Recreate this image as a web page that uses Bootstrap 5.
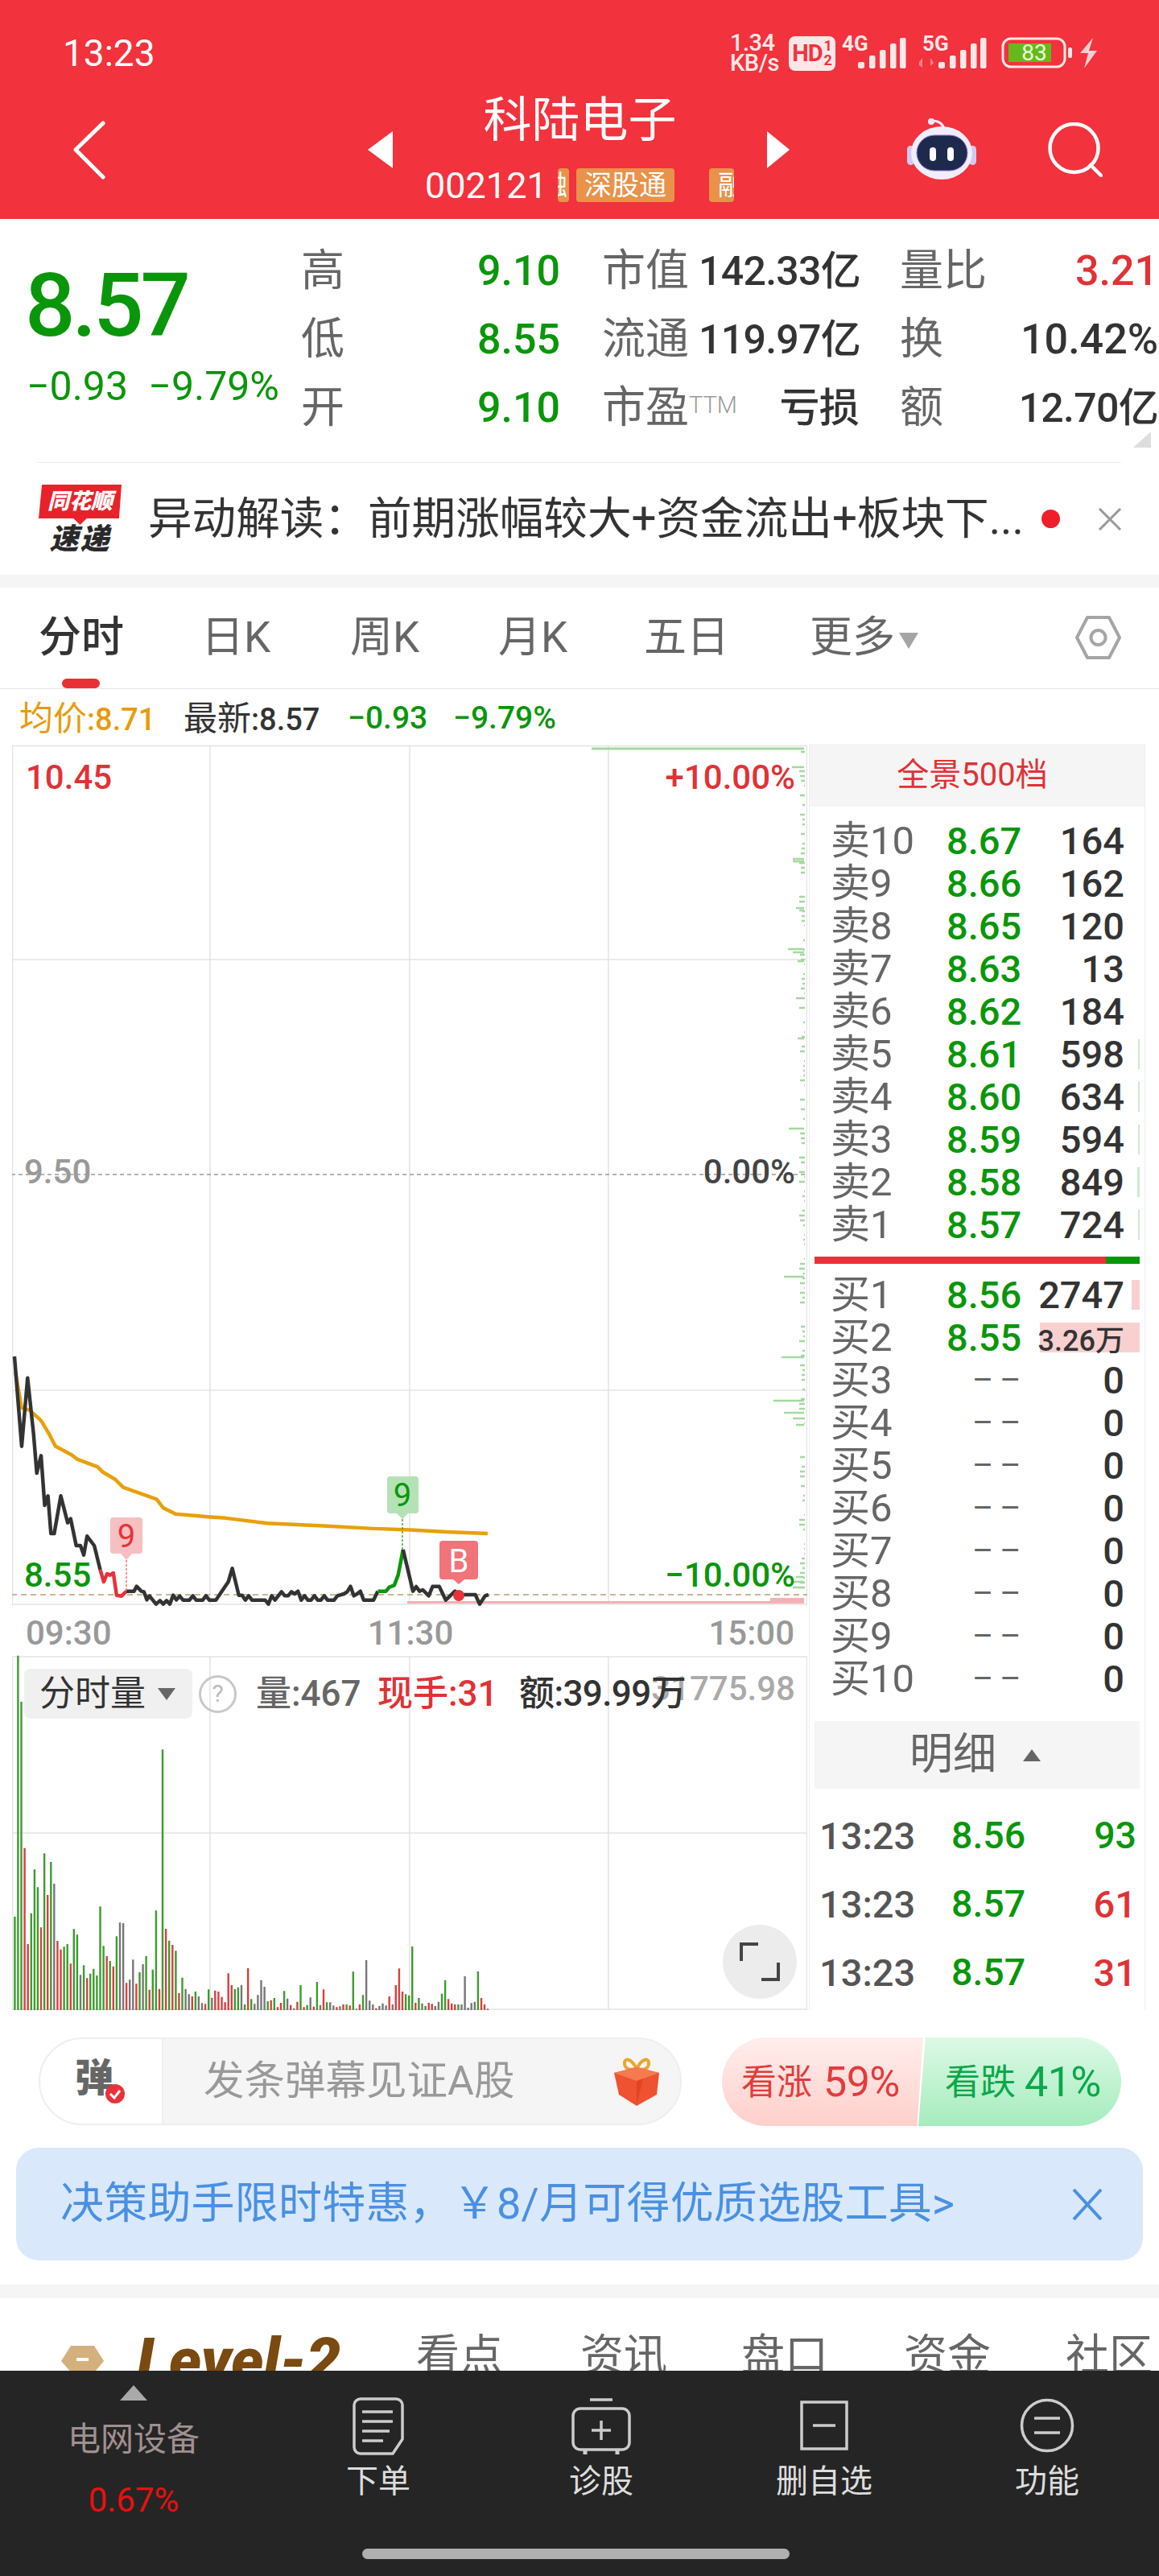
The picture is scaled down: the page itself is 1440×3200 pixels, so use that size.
<!DOCTYPE html>
<html lang="zh"><head><meta charset="utf-8"><title>科陆电子</title>
<link href="https://cdn.jsdelivr.net/npm/bootstrap@5.3.0/dist/css/bootstrap.min.css" rel="stylesheet">
<style>
html,body{margin:0;background:#fff}
body{width:1440px;height:3200px;overflow:hidden;font-family:Roboto,"Noto Sans CJK SC",sans-serif;line-height:1;color:#333}
.up{color:#e03236}.dn{color:#0a960a}.dk{color:#333}.gy{color:#666}
.hdr{background:#f2323c;height:272px;color:#fff}
.sbar{height:110px;padding:22px 76px 0 78px}
.clock{font-size:46px}
.netspeed{font-size:29px;font-weight:500;line-height:25px;width:62px;color:#fde8e8;white-space:nowrap;letter-spacing:-.5px}
.hdchip{width:58px;height:43px;background:#fde8e8;color:#f2323c;border-radius:8px;font-size:29px;font-weight:700;margin-left:11px;letter-spacing:-1px}
.hdsub{font-size:18px;line-height:18px;margin-left:2px;letter-spacing:0}
.tline{height:162px;padding:0 0 10px 90px}
.ctr{width:465px;height:100%}
.tname{font-size:60px;line-height:60px;margin-top:10px}
.coderow{height:46px;margin-top:27px;padding-left:40px;overflow:hidden}
.codeno{font-size:45px;width:149px;text-align:left}
.tg{height:42px;background:#e8924a;border-radius:4px;font-size:34px;overflow:hidden;white-space:nowrap}
.tg1{width:14px;margin-left:16px;justify-content:flex-end;padding-right:2px}
.tg2{width:122px;margin-left:9px;justify-content:center}
.tg3{width:31px;margin-left:43px;padding-left:11px}
.qt{height:302px;padding:22px 0 0 31px}
.qleft{width:343px}
.bigp{font-size:110px;line-height:100px;margin-top:36px;font-weight:500;letter-spacing:-4px}
.subp{font-size:50px;line-height:50px;margin-top:25px;width:316px}
.qgrid{display:grid;grid-template-rows:repeat(3,85px);grid-template-columns:54px 268px 52px 120px 199px 51px 110px 211px;font-size:52px;align-items:center}
.qlb{color:#666;font-size:54px;white-space:nowrap}.qv{text-align:right;font-weight:500;white-space:nowrap}
.qcomp{font-size:50px;letter-spacing:-.7px}
.ttm{font-size:29px;color:#999;vertical-align:12px;font-weight:300}
.corner{position:absolute;right:10px;bottom:18px;width:22px;height:20px;background:#ddd;clip-path:polygon(100% 0,100% 100%,0 100%)}
.rule{height:1px;background:#eee;margin:0 47px 0 46px}
.news{height:139px;padding-left:48px}
.logo{width:103px;height:85px}
.logotop{height:50px;padding-bottom:8px;background:#e8222a;color:#fff;font-size:27px;font-weight:900;font-style:italic;clip-path:polygon(4% 0,100% 0,97% 84%,58% 84%,50% 100%,42% 84%,0 84%)}
.logobot{font-size:36px;font-weight:900;font-style:italic;color:#2a2a2a;line-height:36px;letter-spacing:2px}
.newst{font-size:54.600px;color:#333;margin-left:33px;width:1091px;white-space:nowrap}
.ndot{width:23px;height:23px;background:#f01e28;margin-left:19px}
.band{background:#f5f5f5}
.tabs{height:126px;display:grid;grid-template-columns:202px 185px 184px 181px 206px 330px auto;padding:36px 0 0 48px;border-bottom:1px solid #e5e5e5;font-size:53px;color:#666;position:relative}
.tabon{color:#333;font-weight:500}
.tabbar{position:absolute;left:77px;bottom:0;width:47px;height:12px;background:#ea3035;border-radius:6px}
.infor{height:68px;display:grid;grid-template-columns:204px 204px 131px auto;padding:5px 0 0 24px;font-size:38px;align-items:center;font-weight:500}
.infor b{font-size:42px;font-weight:400}
.infor .dn{font-size:39px}
.avgc{color:#e89b0c}
.wrapm{height:1573px}
.chartc{width:988px;margin-left:15px;margin-right:2px;position:relative;height:1573px}
.chartc svg{display:block}
.chartc text{font-family:Roboto,"Noto Sans CJK SC",sans-serif}
.volh{position:absolute;left:15px;top:1149px;height:62px;font-size:44px}
.chip{width:209px;height:62px;background:#f0f0f0;border-radius:8px;font-size:44px;padding-left:19px;color:#333}
.chipc{width:0;height:0;border-left:11px solid transparent;border-right:11px solid transparent;border-top:15px solid #666;margin-left:15px}
.qm{width:47px;height:47px;border:3px solid #c8c8c8;color:#bbb;font-size:30px;margin-left:8px}
.vcell1{margin-left:24px;width:151px;color:#666;font-weight:500;white-space:nowrap}
.vcell2{width:176px;font-weight:500;white-space:nowrap}
.vcell3{white-space:nowrap;font-weight:500;letter-spacing:-.6px}
.expb{position:absolute;left:883px;top:1467px;width:92px;height:92px;background:#ececec}
.book{width:418px;height:1573px;border-left:1px solid #eee;border-right:1px solid #eee}
.bookh{height:78px;background:#f5f5f5;color:#e03236;font-size:40px;padding-right:12px}
.obr{display:grid;grid-template-columns:144px 91px 1fr;height:53px;padding:0 25px 0 26px;align-items:center;position:relative;font-size:47px;font-weight:500}
.obr>*{position:relative}
.obl{color:#666;font-size:49px;font-weight:400;white-space:nowrap}
.obq{text-align:right;color:#333}
.obq small{font-size:36px}
.dbar{position:absolute!important;right:6px;top:8px;height:37px}
.dg{background:#cfe8cf}.dr{background:#f8d0d0}
.sepb{height:9px;margin:13px 6px 12px}
.sepr{width:362px;background:#e8323a}.sepg{background:#0a960a}
.dsh{font-size:40px;letter-spacing:8px;color:#666;font-weight:400;margin-left:32px;white-space:nowrap}
.dtlb{height:84px;margin:26px 6px 16px;background:#f5f5f5;color:#666;font-size:54px;padding-left:118px}
.dtlc{width:0;height:0;border-left:11px solid transparent;border-right:11px solid transparent;border-bottom:15px solid #666;margin-left:33px}
.dtr{display:grid;grid-template-columns:164px 91px 1fr;height:85px;padding:0 10px 0 12px;align-items:center;font-size:47px;font-weight:500}
.dtr .dn{font-size:46.500px}
.dtt{color:#555}.dtq{text-align:right}
.actr{padding:34px 47px 0 48px;height:143px}
.pill{width:799px;height:109px;border:2px solid #eee;border-radius:55px;overflow:hidden;background:#f5f5f5}
.pilll{width:153px;height:100%;background:#fff;border-right:2px solid #eee;padding:0 0 8px 43px;position:relative;font-size:48px;font-weight:900;color:#666}
.pillt{font-size:50.500px;color:#999;margin-left:50px;width:509px;white-space:nowrap}
.vote{margin-left:50px;height:110px;width:496px;position:relative}
.vup,.vdn{position:absolute;top:0;height:110px;font-size:44px;white-space:nowrap;padding-top:30px}
.vnum{font-size:52px;vertical-align:-2px;letter-spacing:-.5px}
.vup{left:0;width:250px;background:linear-gradient(#ffeeec,#ffcfcb);color:#e23c3c;border-radius:55px 0 0 55px;clip-path:polygon(0 0,100% 0,97% 100%,0 100%);padding-left:24px}
.vup .vnum{margin-left:3px}
.vdn{left:244px;width:252px;background:linear-gradient(#dcf9e6,#a5ecbd);color:#0aa84a;border-radius:0 55px 55px 0;clip-path:polygon(3.500% 0,100% 0,100% 100%,0 100%);padding-left:33px}
.banner{height:140px;margin:28px 20px 0;background:#d9e8fb;border-radius:28px;color:#4a90e2;font-size:54px;padding:0 50px 0 55px;white-space:nowrap;letter-spacing:.2px}
.g30{height:17px;margin-top:30px;background:#f5f5f5}
.stabs{height:90px;overflow:hidden;display:grid;grid-template-columns:94px 347px 204px 200px 202px 201px auto;padding-left:76px;position:relative;font-size:54px;color:#666}
.stabs>span{padding-top:45px;white-space:nowrap}
.lvl{font-size:76px;font-weight:900;font-style:italic;color:#7a4a10;padding-top:39px!important}
.stabs>.hexi{padding-top:53px}
.fade{position:absolute;right:0;top:0;bottom:0;width:65px;background:linear-gradient(90deg,rgba(255,255,255,0),#fff)}
.bnav{height:255px;background:#252525}
.bgrid{display:grid;grid-template-columns:332px 276px 278px 276px 278px;height:221px}
.bcol{display:flex;flex-direction:column;align-items:center}
.bicon{height:72px;margin-top:33px}
.blab{font-size:40px;line-height:40px;color:#ddd;margin-top:13px;white-space:nowrap}
.btri{width:0;height:0;border-left:17px solid transparent;border-right:17px solid transparent;border-bottom:19px solid #aaa;margin-top:18px}
.bsn{font-size:41px;line-height:41px;color:#a09090;margin-top:28px}
.bpc{font-size:42px;line-height:42px;color:#e81010;margin-top:34px}
.homeb{width:531px;height:13px;background:#b0b0b0;border-radius:7px;margin-left:450px}
</style></head><body>

<div class="hdr">
 <div class="sbar d-flex justify-content-between align-items-center">
  <div class="clock">13:23</div>
  <div class="d-flex align-items-center">
   <div class="netspeed">1.34<br>KB/s</div>
   <div class="hdchip d-flex align-items-center justify-content-center">HD<span class="hdsub">1<br>2</span></div>
   <svg width="319" height="46" viewBox="0 0 319 46" style="margin-left:7px" fill="#fde8e8">
    <text x="1" y="20" font-size="26" font-weight="700" font-family="Roboto">4G</text>
    <rect x="21" y="34" width="8" height="8" rx="2"/><rect x="35" y="26" width="7.500" height="16" rx="2"/><rect x="48" y="19" width="7.500" height="23" rx="2"/><rect x="61" y="11" width="7.500" height="31" rx="2"/><rect x="73" y="4" width="7.500" height="38" rx="2"/>
    <text x="101" y="20" font-size="26" font-weight="700" font-family="Roboto">5G</text>
    <path d="M97 34l4-5 0 12-4-3zM111 39l4-4-4-6z" opacity=".45"/>
    <rect x="121" y="34" width="8" height="8" rx="2"/><rect x="135" y="26" width="7.500" height="16" rx="2"/><rect x="148" y="19" width="7.500" height="23" rx="2"/><rect x="161" y="11" width="7.500" height="31" rx="2"/><rect x="173" y="4" width="7.500" height="38" rx="2"/>
    <rect x="201" y="5" width="77" height="35" rx="10" fill="none" stroke="#fde8e8" stroke-width="3"/>
    <rect x="208" y="11" width="53" height="23" fill="#66b81e"/>
    <rect x="282" y="16" width="5" height="13" rx="2"/>
    <text x="240" y="32" font-size="28" text-anchor="middle" font-family="Roboto" fill="#eaffdc">83</text>
    <path d="M313 4 297 23h10l-5 19 16-22h-10z" fill="#fbd0d2"/>
   </svg>
  </div>
 </div>
 <div class="tline d-flex align-items-center">
  <svg width="41" height="73" viewBox="0 0 41 73"><path d="M38 3 4 36l34 34" fill="none" stroke="#fff" stroke-width="5" stroke-linecap="round" stroke-linejoin="round"/></svg>
  <svg width="31" height="46" viewBox="0 0 31 46" style="margin-left:326px"><path d="M31 0v46L0 23z" fill="#fff"/></svg>
  <div class="ctr align-self-start text-center">
   <div class="tname">科陆电子</div>
   <div class="coderow d-flex align-items-center">
    <span class="codeno">002121</span>
    <span class="tg tg1 d-flex align-items-center">融</span>
    <span class="tg tg2 d-flex align-items-center">深股通</span>
    <span class="tg tg3 d-flex align-items-center">融资</span>
   </div>
  </div>
  <svg width="28" height="46" viewBox="0 0 28 46"><path d="M0 0v46l28-23z" fill="#fff"/></svg>
  <svg width="86" height="78" viewBox="0 0 86 78" style="margin-left:146px">
   <path d="M31 3c8 0 13 3 15 10" fill="none" stroke="#ece8fa" stroke-width="3"/><circle cx="30" cy="4" r="4" fill="#ece8fa"/>
   <rect x="0" y="34" width="9" height="24" rx="4.500" fill="#cfcaf2"/><rect x="77" y="34" width="9" height="24" rx="4.500" fill="#cfcaf2"/>
   <ellipse cx="43" cy="43" rx="38" ry="33" fill="#f1eefb"/>
   <rect x="12" y="21" width="63" height="44" rx="22" fill="#1d2a4d" stroke="#8a6fe0" stroke-width="1"/>
   <rect x="28" y="36" width="8" height="17" rx="4" fill="#fff"/><rect x="50" y="36" width="8" height="17" rx="4" fill="#fff"/>
  </svg>
  <svg width="68" height="68" viewBox="0 0 68 68" style="margin-left:89px"><circle cx="32.500" cy="32" r="30" fill="none" stroke="#fff" stroke-width="4.500"/><path d="M53 53l13 13" stroke="#fff" stroke-width="4.500" stroke-linecap="round"/></svg>
 </div>
</div>

<div class="qt d-flex position-relative">
 <div class="qleft">
  <div class="bigp dn">8.57</div>
  <div class="subp dn d-flex justify-content-between"><span style="margin-left:2px">−0.93</span><span>−9.79%</span></div>
 </div>
 <div class="qgrid">
  <span class="qlb">高</span><span class="qv dn">9.10</span><span></span><span class="qlb">市值</span><span class="qv dk qcomp">142.33亿</span><span></span><span class="qlb">量比</span><span class="qv up">3.21</span>
  <span class="qlb">低</span><span class="qv dn">8.55</span><span></span><span class="qlb">流通</span><span class="qv dk qcomp">119.97亿</span><span></span><span class="qlb">换</span><span class="qv dk">10.42%</span>
  <span class="qlb">开</span><span class="qv dn">9.10</span><span></span><span class="qlb">市盈<span class="ttm">TTM</span></span><span class="qv dk qcomp">亏损</span><span></span><span class="qlb">额</span><span class="qv dk qcomp">12.70亿</span>
 </div>
 <span class="corner"></span>
</div>
<div class="rule"></div>
<div class="news d-flex align-items-center">
 <div class="logo text-center">
  <div class="logotop d-flex align-items-center justify-content-center">同花顺</div>
  <div class="logobot">速递</div>
 </div>
 <div class="newst">异动解读：前期涨幅较大+资金流出+板块下...</div>
 <span class="ndot rounded-circle"></span>
 <svg width="30" height="28" viewBox="0 0 30 28" style="margin-left:47px"><path d="M2 1l26 26M28 1 2 27" stroke="#999" stroke-width="3"/></svg>
</div>
<div class="band" style="height:16px"></div>

<div class="tabs">
 <span class="tabon">分时</span><span>日K</span><span>周K</span><span>月K</span><span>五日</span>
 <span>更多<svg width="26" height="20" viewBox="0 0 26 20" class="ms-1 align-middle"><path d="M1 0h24L13 20z" fill="#a5a5a5"/></svg></span>
 <svg width="57" height="54" viewBox="0 0 57 54" fill="none" stroke="#a5a5a5" stroke-width="4" style="margin-top:-1px"><path d="M15 2h27l13 25-13 25H15L2 27z" stroke-linejoin="round"/><circle cx="28.500" cy="27" r="9"/></svg>
 <i class="tabbar"></i>
</div>
<div class="infor">
 <span class="avgc"><b>均价</b>:8.71</span><span><b>最新</b>:8.57</span><span class="dn">−0.93</span><span class="dn">−9.79%</span>
</div>

<div class="wrapm d-flex">
 <div class="chartc">
  <svg width="988" height="1573" viewBox="15 924 988 1573">
   <g stroke="#e4e4e4" stroke-width="1.500" fill="none">
    <path d="M15.500 926V1993M261 926V1993M509 926V1993M756 926V1993M1002.500 926V1993M15 926.500H1003M15 1192H1003M15 1727H1003M15 1993H1003"/>
    <path d="M15.500 2058V2497M261 2058V2497M509 2058V2497M756 2058V2497M1002.500 2058V2497M15 2058H1003M15 2277H1003M15 2496H1003"/>
   </g>
   <g id="ticks"></g>
   <path d="M735 930H999" stroke="#a5d8a0" stroke-width="3"/>
   <path d="M14 1459H1003" stroke="#999" stroke-width="1.500" stroke-dasharray="5 4"/>
   <path d="M14 1981H1003" stroke="#b8a070" stroke-width="1.500" stroke-dasharray="7 5"/>
   <path d="M506 1990.500H999" stroke="#f4b0b5" stroke-width="3"/>
   <rect x="957" y="1985" width="42" height="7" fill="#f4b0b5"/>
   <g fill="none" stroke-linejoin="round" transform="translate(0,1500) scale(.6378)">
    <polyline vector-effect="non-scaling-stroke" stroke="#e8a00c" stroke-width="4.500" points="30,320 42,390 58,395 80,415 95,440 108,465 140,482 150,490 190,505 200,515 225,530 240,545 305,568 318,585 342,597 410,603 440,605 520,615 630,620 720,625 800,628 870,632 950,635"/>
   </g>
   <g fill="none" stroke-linejoin="round" transform="translate(0,1800) scale(.40816,.33333)">
    <polyline vector-effect="non-scaling-stroke" stroke="#333" stroke-width="4.500" points="44,-345 66,-10 84,-265 102,-58 112,90 125,25 136,210 146,175 155,315 165,315 185,175 206,275 215,260 232,360 245,360 255,395 265,325 287,360 305,450"/>
    <polyline vector-effect="non-scaling-stroke" stroke="#e8323a" stroke-width="4.500" points="305,450 316,495 326,465 335,470 345,462 355,545 370,548 385,530"/>
    <polyline vector-effect="non-scaling-stroke" stroke="#333" stroke-width="4.500" points="385,530 408,530 416,512 430,530 438,532 447,562 455,548 475,578 487,565 497,578 507,565 517,578 527,545 537,562 547,548 557,563 577,563 587,547 597,563 617,563 627,547 637,563 657,563 695,495 707,445 727,545 737,545 747,563 757,547 767,563 807,563 817,578 827,547 837,563 857,532 867,547 877,547 887,532 897,540 907,530 917,563 927,547 937,563 947,563 957,547 967,563 977,563 987,547 997,563 1017,563 1027,547 1047,540 1057,532 1067,512 1077,547 1087,540 1097,530 1107,563 1137,563 1150,530"/>
    <polyline vector-effect="non-scaling-stroke" stroke="#0a960a" stroke-width="4.500" points="1150,530 1175,530 1185,515 1200,508 1212,470 1227,375"/>
    <polyline vector-effect="non-scaling-stroke" stroke="#333" stroke-width="4.500" points="1227,375 1257,530 1267,513 1277,530 1287,525 1305,547 1317,512 1337,512 1357,563 1385,530 1397,543 1447,543 1460,578 1477,547 1487,543"/>
   </g>
   <path d="M157 1938V1977" stroke="#e8505a" stroke-width="1.200" stroke-dasharray="3 2"/>
   <path d="M500 1887V1925" stroke="#0a960a" stroke-width="1.200" stroke-dasharray="3 2"/>
   <path d="M141 1885h32a4 4 0 0 1 4 4v37a4 4 0 0 1-4 4h-9l-7 8-7-8h-9a4 4 0 0 1-4-4v-37a4 4 0 0 1 4-4z" fill="#f6c0c0"/>
   <path d="M485 1834h31a4 4 0 0 1 4 4v38a4 4 0 0 1-4 4h-9l-7 7-7-7h-8a4 4 0 0 1-4-4v-38a4 4 0 0 1 4-4z" fill="#b5e2b5"/>
   <path d="M550 1914h40a4 4 0 0 1 4 4v40a4 4 0 0 1-4 4h-13l-7 6-7-6h-13a4 4 0 0 1-4-4v-40a4 4 0 0 1 4-4z" fill="#f0747a"/>
   <circle cx="570" cy="1982" r="7" fill="#e8323a"/>
   <g font-size="40" text-anchor="middle">
    <text x="157" y="1922" fill="#e8323a">9</text><text x="500" y="1871" fill="#0a960a">9</text><text x="570" y="1953" fill="#fff">B</text>
   </g>
   <g font-size="42" font-weight="500">
    <text x="32" y="980" fill="#e03236">10.45</text>
    <text x="988" y="980" fill="#e03236" text-anchor="end">+10.00%</text>
    <text x="30" y="1470" fill="#999">9.50</text>
    <text x="988" y="1470" fill="#444" text-anchor="end">0.00%</text>
    <text x="30" y="1971" fill="#0a960a">8.55</text>
    <text x="988" y="1971" fill="#0a960a" text-anchor="end">−10.00%</text>
    <text x="32" y="2043" fill="#999">09:30</text>
    <text x="510" y="2043" fill="#999" text-anchor="middle">11:30</text>
    <text x="987" y="2043" fill="#999" text-anchor="end">15:00</text>
    <text x="988" y="2112" fill="#aaa" text-anchor="end">31775.98</text>
   </g>
   <g id="bars"></g>
  </svg>
  <div class="volh d-flex align-items-center">
   <div class="chip d-flex align-items-center">分时量<i class="chipc"></i></div>
   <span class="qm rounded-circle d-flex align-items-center justify-content-center">?</span>
   <span class="vcell1">量:467</span><span class="vcell2 up">现手:31</span><span class="vcell3 dk">额:39.99万</span>
  </div>
  <button class="expb btn rounded-circle p-0 border-0 d-flex align-items-center justify-content-center" aria-label="全屏">
   <svg width="50" height="48" viewBox="0 0 50 48" fill="none" stroke="#444" stroke-width="4"><path d="M23 2H2v21M27 46h21V25"/></svg>
  </button>
 </div>

 <div class="book">
  <div class="bookh d-flex align-items-center justify-content-center">全景500档</div>
  <div style="height:16px"></div>
  <div class="obr"><span class="obl">卖10</span><span class="dn">8.67</span><span class="obq">164</span></div>
  <div class="obr"><span class="obl">卖9</span><span class="dn">8.66</span><span class="obq">162</span></div>
  <div class="obr"><span class="obl">卖8</span><span class="dn">8.65</span><span class="obq">120</span></div>
  <div class="obr"><span class="obl">卖7</span><span class="dn">8.63</span><span class="obq">13</span></div>
  <div class="obr"><span class="obl">卖6</span><span class="dn">8.62</span><span class="obq">184</span></div>
  <div class="obr"><i class="dbar dg" style="width:2px"></i><span class="obl">卖5</span><span class="dn">8.61</span><span class="obq">598</span></div>
  <div class="obr"><i class="dbar dg" style="width:2px"></i><span class="obl">卖4</span><span class="dn">8.60</span><span class="obq">634</span></div>
  <div class="obr"><i class="dbar dg" style="width:2px"></i><span class="obl">卖3</span><span class="dn">8.59</span><span class="obq">594</span></div>
  <div class="obr"><i class="dbar dg" style="width:3px"></i><span class="obl">卖2</span><span class="dn">8.58</span><span class="obq">849</span></div>
  <div class="obr"><i class="dbar dg" style="width:2px"></i><span class="obl">卖1</span><span class="dn">8.57</span><span class="obq">724</span></div>
  <div class="sepb d-flex"><i class="sepr"></i><i class="sepg flex-grow-1"></i></div>
  <div class="obr"><i class="dbar dr" style="width:10px"></i><span class="obl">买1</span><span class="dn">8.56</span><span class="obq">2747</span></div>
  <div class="obr"><i class="dbar dr" style="width:124px"></i><span class="obl">买2</span><span class="dn">8.55</span><span class="obq"><small>3.26万</small></span></div>
  <div class="obr"><span class="obl">买3</span><span class="dsh">––</span><span class="obq">0</span></div>
  <div class="obr"><span class="obl">买4</span><span class="dsh">––</span><span class="obq">0</span></div>
  <div class="obr"><span class="obl">买5</span><span class="dsh">––</span><span class="obq">0</span></div>
  <div class="obr"><span class="obl">买6</span><span class="dsh">––</span><span class="obq">0</span></div>
  <div class="obr"><span class="obl">买7</span><span class="dsh">––</span><span class="obq">0</span></div>
  <div class="obr"><span class="obl">买8</span><span class="dsh">––</span><span class="obq">0</span></div>
  <div class="obr"><span class="obl">买9</span><span class="dsh">––</span><span class="obq">0</span></div>
  <div class="obr"><span class="obl">买10</span><span class="dsh">––</span><span class="obq">0</span></div>
  <div class="dtlb d-flex align-items-center">明细<i class="dtlc"></i></div>
  <div class="dtr"><span class="dtt">13:23</span><span class="dn">8.56</span><span class="dtq dn">93</span></div>
  <div class="dtr"><span class="dtt">13:23</span><span class="dn">8.57</span><span class="dtq up">61</span></div>
  <div class="dtr"><span class="dtt">13:23</span><span class="dn">8.57</span><span class="dtq up">31</span></div>
 </div>
</div>

<div class="actr d-flex">
 <div class="pill d-flex align-items-center">
  <div class="pilll d-flex align-items-center"><span>弹</span>
   <svg width="24" height="24" viewBox="0 0 24 24" style="position:absolute;left:81px;top:56px"><circle cx="12" cy="12" r="12" fill="#e8323a"/><path d="M6 12l5 5 7-9" fill="none" stroke="#fff" stroke-width="3"/></svg>
  </div>
  <div class="pillt">发条弹幕见证A股</div>
  <svg width="58" height="62" viewBox="0 0 58 62">
   <path d="M29 15C22 1 13 1 14 9s9 7 15 6c6 1 14 2 15-6S36 1 29 15z" fill="none" stroke="#eaa632" stroke-width="4"/>
   <path d="M1 20l28-7 28 7-3 27-25 14-22-14z" fill="#ee5230"/><path d="M1 20l28 10 28-10-28-7z" fill="#f47a50"/><path d="M29 30l8-3-8 33z" fill="#d8401f" opacity=".7"/>
  </svg>
 </div>
 <div class="vote">
  <div class="vup">看涨 <span class="vnum">59%</span></div>
  <div class="vdn">看跌 <span class="vnum">41%</span></div>
 </div>
</div>
<div class="banner d-flex align-items-center justify-content-between">
 <span>决策助手限时特惠，￥8/月可得优质选股工具&gt;</span>
 <svg width="38" height="39" viewBox="0 0 38 39"><path d="M2 1l34 37M36 1 2 38" stroke="#4a90e2" stroke-width="4"/></svg>
</div>
<div class="g30"></div>
<div class="stabs">
 <span class="hexi"><svg width="53" height="50" viewBox="0 0 53 50"><path d="M12 0h29l12 19-26 31L0 19z" fill="#d4b07e"/><path d="M19 15h15v4H19z" fill="#fff"/></svg></span>
 <span class="lvl">Level-2</span><span>看点</span><span>资讯</span><span>盘口</span><span>资金</span><span>社区</span>
 <i class="fade"></i>
</div>
<div class="bnav">
 <div class="bgrid">
  <div class="bcol"><i class="btri"></i><div class="bsn">电网设备</div><div class="bpc">0.67%</div></div>
  <div class="bcol"><svg class="bicon" width="64" height="72" viewBox="0 0 64 72" fill="none" stroke="#ccc" stroke-width="3.500"><path d="M10 2h44a8 8 0 0 1 8 8v42L50 70H10a8 8 0 0 1-8-8V10a8 8 0 0 1 8-8z"/><path d="M12 18h38M12 30h38M12 42h34M12 54h26"/></svg><div class="blab">下单</div></div>
  <div class="bcol"><svg class="bicon" width="76" height="72" viewBox="0 0 76 72" fill="none" stroke="#ccc" stroke-width="3.500"><path d="M24 3h28"/><path d="M12 14h52a9 9 0 0 1 9 9v33a9 9 0 0 1-9 9H12a9 9 0 0 1-9-9V23a9 9 0 0 1 9-9z"/><path d="M38 29v24M26 41h24"/><path d="M18 66v5M58 66v5" stroke-width="5"/></svg><div class="blab">诊股</div></div>
  <div class="bcol"><svg class="bicon" width="60" height="72" viewBox="0 0 60 72" fill="none" stroke="#ccc" stroke-width="3.500"><rect x="2" y="6" width="56" height="58"/><path d="M16 35h28"/></svg><div class="blab">删自选</div></div>
  <div class="bcol"><svg class="bicon" width="68" height="72" viewBox="0 0 68 72" fill="none" stroke="#ccc" stroke-width="3.500"><circle cx="34" cy="35" r="31.500"/><path d="M18 26h32M18 44h32"/></svg><div class="blab">功能</div></div>
 </div>
 <div class="homeb"></div>
</div>

<script>
(function(){
var t="45g 55g 65g 75r 85r 95g 105g 115g 125r 135g 145r 155g 165k 175r 185r 195g 205g 215r 225g 235g 245k 255g 265r 275g 285g 295g 305g 315g 325r 335g 345r 355g 365k 375k 385r 395k 405k 415r 425g 435k 445g 455r 465g 475g 485r 495g 505r 515g 525r 535g 545r 555g 565k 575k 585r 595g 605k 615k 625r 635g 645k 655r 665r 675r 685r 695r 705r 715g 725g 735k 745g 755r 765g 775k 785k 795k 805k 815g 825r 835g 845r 855r 865g 875k 885r 895k 905r 915g 925r 935g 945k 955r 965g 975k 985r 995g 1005k 1015k 1025r 1035k 1045r 1055g 1065r 1075g 1085k 1095r 1105g 1115k 1125k 1135k 1145r 1155k 1165k 1175k 1185r 1195k 1205r 1215r 1225r 1235g 1245g 1255g 1265r 1275g 1285k 1295g 1305r 1315r 1325k 1335k 1345g 1355g 1365r 1375r 1385r 1395g 1405k 1415k 1425k 1435k 1445k 1455g 1465r 1475r 1485k".split(" ");
var h=[993,20,192,737,1095,980,817,883,1033,757,912,789,870,1083,1115,1105,1095,1168,1039,1060,1210,1174,1222,1205,1187,1212,955,1102,1140,1158,1178,1066,1015,1017,1240,1228,1153,1243,1200,1170,1140,1265,1190,970,1262,370,1038,1082,1098,1120,1278,1220,1262,1282,1290,1272,1290,1315,1318,1264,1295,1268,1272,1292,1312,1204,1248,1263,1256,1247,1320,1185,1300,1318,1285,1230,1254,1308,1304,1296,1330,1314,1270,1298,1322,1334,1310,1248,1330,1322,1294,1328,1236,1322,1264,1312,1312,1324,1330,1327,1320,1320,1324,1198,1336,1320,1285,1155,1306,1320,1334,1326,1316,1324,1290,1320,1248,1186,1272,1282,1286,1104,1314,1296,1316,1326,1314,1318,1326,1310,1280,1230,1300,1316,1320,1320,1320,1215,1332,1315,1310,1197,1296,1320,1336];
var c={g:"#3d9b2f",r:"#d84040",k:"#777"},p={g:"",r:"",k:""};
t.forEach(function(s,i){var x=parseInt(s)/2.45,k=s.slice(-1);p[k]+="M"+x.toFixed(1)+" 2497V"+(2050+h[i]/3).toFixed(1);});
var o="";for(var k in p){o+='<path fill="none" stroke-width="2.4" stroke="'+c[k]+'" d="'+p[k]+'"/>';}
document.getElementById("bars").innerHTML=o;
var b=[[953,15],[1036,4],[1067,14],[1070,14],[1128,10],[1131,6],[1179,20],[1183,14],[1194,8],[1240,10],[1290,8],[1402,19],[1586,25],[1686,28],[1740,38],[1755,25],[1762,14],[1770,10],[1959,10],[1965,14],[1972,14]];
var s=7,d="";for(var y=934;y<1985;y+=6){s=(s*137+29)%251;if(s%3){d+="M"+(999-s%7)+" "+y+"h"+(s%7+1);}}
b.forEach(function(a){d+="M"+(999-a[1])+" "+a[0]+"h"+a[1];});
document.getElementById("ticks").innerHTML='<path fill="none" stroke="#a5d8a0" stroke-width="2.5" d="'+d+'"/>';
})();
</script>
<script src="https://cdn.jsdelivr.net/npm/bootstrap@5.3.0/dist/js/bootstrap.bundle.min.js"></script>
</body></html>
